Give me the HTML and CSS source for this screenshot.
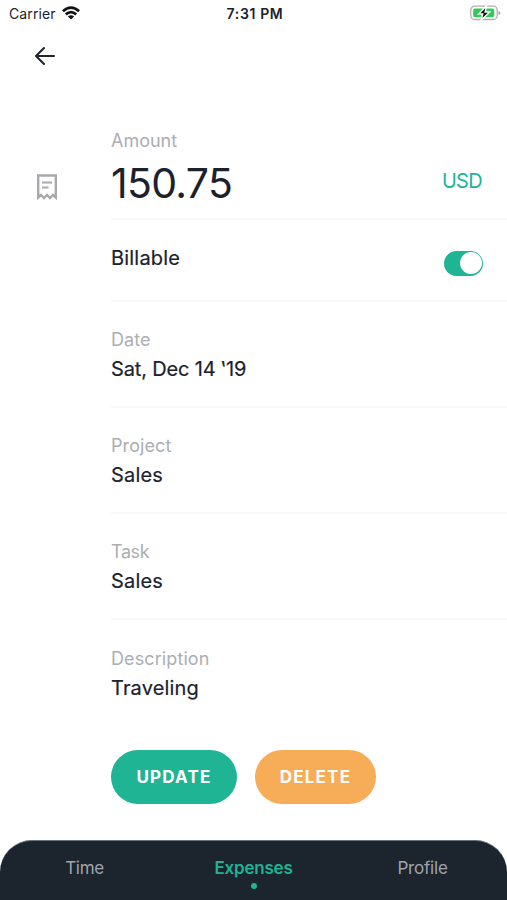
FILE: index.html
```html
<!DOCTYPE html>
<html lang="en">
<head>
<meta charset="utf-8">
<title>Expense</title>
<link rel="stylesheet" href="styles.css">
</head>
<body>
<div class="screen">
  <header class="status">
    <div class="carrier"><span>Carrier</span>
      <svg class="wifi" viewBox="0 0 18 14" width="18" height="14"><g fill="none" stroke="#111" stroke-width="2.8"><path d="M.9 5.3Q9-2.1 17.1 5.3"/><path d="M3.8 8.4Q9 3.9 14.2 8.4"/></g><path d="M5.9 10.4Q9 7.9 12.1 10.4L9 13.5Z" fill="#111"/></svg>
    </div>
    <div class="clock">7:31 PM</div>
    <svg class="battery" viewBox="0 0 31 16" width="31" height="16"><rect x=".75" y="1.1" width="26.5" height="13.4" rx="4" fill="#fff" stroke="#b0b0b0" stroke-width="1.3"/><rect x="3.2" y="3.4" width="21" height="8.8" rx="2" fill="#35c759"/><path d="M28.5 6v4q2-.5 2-2t-2-2Z" fill="#aaa"/><path d="M16.6.8 8.6 9h4.1l-1.5 6L19.8 7h-4.7Z" fill="#111" stroke="#fff" stroke-width="1.4"/></svg>
  </header>
  <nav class="back"><svg viewBox="0 0 22 20" width="22" height="20" fill="none" stroke="#20252b" stroke-width="2.1" stroke-linecap="round" stroke-linejoin="round"><path d="M20 10H2M10 2 2 10l8 8"/></svg></nav>
  <main class="form">
    <aside class="receipt"><svg viewBox="0 0 22 26" width="22" height="26" fill="none" stroke="#a7a9ac" stroke-width="2.4"><path d="M2.2 1.5h17.6v22l-2.8-2.5-3 3-3-3-3 3-3-3-2.8 2.5Z"/><path d="M6 8.5h10M6 13.5h6.5" stroke-width="2.2"/></svg></aside>
    <div class="fields">
      <section class="row amount"><div><p class="label l-amount">Amount</p><p class="number">150.75</p></div><span class="currency">USD</span></section>
      <section class="row billable"><p class="value v-billable">Billable</p><span class="toggle"><i class="knob"></i></span></section>
      <section class="row detail"><p class="label l-date">Date</p><p class="value v-date">Sat, Dec 14 ‛19</p></section>
      <section class="row detail"><p class="label l-project">Project</p><p class="value v-sales">Sales</p></section>
      <section class="row detail"><p class="label l-task">Task</p><p class="value v-sales">Sales</p></section>
      <section class="row detail last"><p class="label l-description">Description</p><p class="value v-travel">Traveling</p></section>
      <div class="actions"><button class="btn update">UPDATE</button><button class="btn delete">DELETE</button></div>
    </div>
  </main>
  <footer class="tabs"><span class="tab time">Time</span><span class="tab active">Expenses<i class="dot"></i></span><span class="tab profile">Profile</span></footer>
</div>
</body>
</html>
```
FILE: styles.css
```css
* { box-sizing: border-box; }
body { margin: 0; background: #fff; font-family: Inter, "Liberation Sans", sans-serif; color: #1b222c; }
p { margin: 0; white-space: nowrap; }
.screen { width: 507px; height: 900px; display: flex; flex-direction: column; overflow: hidden; }
.status { height: 28px; display: grid; grid-template-columns: 1fr auto 1fr; padding: 0 6px 0 9px; font-size: 14px; line-height: 28px; }
.carrier { display: flex; gap: 6px; letter-spacing: .1px; }
.wifi { margin-top: 6px; }
.clock { font-weight: 600; letter-spacing: .65px; }
.battery { justify-self: end; margin-top: 5px; }
.back { height: 89px; padding: 18px 0 0 34px; }
.back svg { display: block; }
.form { height: 723px; display: flex; }
.receipt { width: 111px; padding: 57px 0 0 36px; }
.fields { flex: 1; }
.row { border-bottom: 2px solid #f8f8f8; }
.label { font-size: 18px; line-height: 24px; color: #acaeb3; }
.value { font-size: 20px; line-height: 28px; -webkit-text-stroke: .2px currentColor; }
.l-date, .l-project, .l-description { letter-spacing: .1px; }
.l-task { letter-spacing: -.4px; }
.v-billable { letter-spacing: .2px; }
.v-date { letter-spacing: -.15px; }
.v-sales { letter-spacing: .2px; }
.v-travel { letter-spacing: .15px; }
.amount { height: 103px; display: flex; justify-content: space-between; padding: 12px 25px 0 0; }
.number { font-size: 41px; line-height: 50px; margin-top: 5px; letter-spacing: -.7px; }
.currency { font-size: 20px; line-height: 28px; margin-top: 38px; color: #1eb494; letter-spacing: -.7px; }
.billable { height: 82px; display: flex; justify-content: space-between; padding: 24px 24px 0 0; }
.toggle { width: 39px; height: 25px; margin-top: 6.5px; padding: 1.5px; border-radius: 13px; background: #1eb494; display: flex; justify-content: flex-end; }
.knob { width: 22px; height: 22px; border-radius: 50%; background: #fff; }
.detail { height: 106px; padding-top: 26px; }
.detail .value { margin-top: 3px; }
.last { border: 0; padding-top: 27px; }
.actions { display: flex; gap: 18px; margin-top: 24px; }
.btn { height: 54px; padding: 0; border: 0; border-radius: 27px; color: #fff; font: 700 17px/54px Inter, sans-serif; letter-spacing: 1.2px; }
.update { width: 126px; background: #1eb494; }
.delete { width: 121px; background: #f7ad58; }
.tabs { height: 60px; flex: none; background: #1c242e; border-top: 1px solid #66737a; border-radius: 32px 32px 0 0; display: grid; grid-template-columns: repeat(3, 1fr); text-align: center; font-size: 17px; line-height: 24px; padding-top: 15px; color: #a0a4ae; }
.time { letter-spacing: -.3px; }
.active { color: #1eb494; font-weight: 600; letter-spacing: -.2px; display: flex; flex-direction: column; align-items: center; }
.profile { letter-spacing: -.2px; }
.dot { width: 6px; height: 6px; border-radius: 50%; background: #1eb494; margin-top: 3px; }
```
